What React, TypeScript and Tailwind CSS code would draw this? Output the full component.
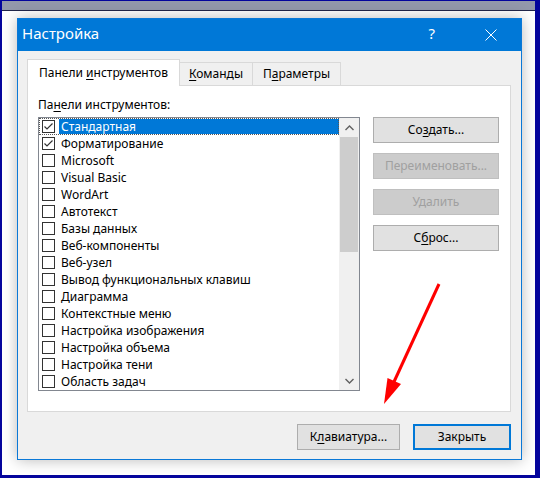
import React from "react";

const ITEMS = [
  "Стандартная",
  "Форматирование",
  "Microsoft",
  "Visual Basic",
  "WordArt",
  "Автотекст",
  "Базы данных",
  "Веб-компоненты",
  "Веб-узел",
  "Вывод функциональных клавиш",
  "Диаграмма",
  "Контекстные меню",
  "Настройка изображения",
  "Настройка объема",
  "Настройка тени",
  "Область задач",
];

function Check() {
  return (
    <svg width="11" height="11" viewBox="0 0 11 11" className="block">
      <polyline points="1.5,5.5 4,8 9.5,2.5" fill="none" stroke="#333" strokeWidth="1.2" />
    </svg>
  );
}

function Btn({ children, disabled, primary, className = "" }: { children: React.ReactNode; disabled?: boolean; primary?: boolean; className?: string }) {
  return (
    <div
      className={`h-[26px] flex items-center justify-center text-[12px] ${
        disabled
          ? "bg-[#cccccc] border border-[#bfbfbf] text-[#a0a0a0]"
          : primary
            ? "bg-[#e1e1e1] border-2 border-[#0078d7] text-black"
            : "bg-[#e1e1e1] border border-[#adadad] text-black"
      } ${className}`}
    >
      <span>{children}</span>
    </div>
  );
}

export default function App() {
  return (
    <div className="relative w-[540px] h-[478px] overflow-hidden bg-white flex flex-col border-[#04049c] border-t border-l-2 border-r-[5px] border-b-[3px] font-['Noto_Sans',sans-serif]">
      <div className="h-[9px] shrink-0 bg-[#9398ab]" />
      <div className="h-px shrink-0 bg-[#22264a]" />
      <div className="flex-1 pl-[15px] pt-[7px]">
        <div className="w-[505px] h-[442px] border border-[#0a78d7] bg-[#f0f0f0] flex flex-col shadow-[0_0_14px_rgba(0,0,0,0.28)]">
          {/* title bar */}
          <div className="h-[32px] shrink-0 bg-[#0078d7] flex items-center pl-[4px] pr-[24px] pb-[3px] text-white">
            <span className="text-[15px] leading-none">Настройка</span>
            <span className="ml-auto text-[15px] leading-none mr-[50px]">?</span>
            <svg width="12" height="12" viewBox="0 0 12 12" className="mt-[2px]">
              <path d="M0.5 0.5L11.5 11.5M11.5 0.5L0.5 11.5" stroke="#fff" strokeWidth="1" />
            </svg>
          </div>

          <div className="flex-1 flex flex-col pl-[9px] pt-[8px]">
            {/* tabs */}
            <div className="flex items-end h-[26px] text-[12px] text-black">
              <div className="relative z-10 -mb-px h-[27px] w-[153px] bg-white border border-b-0 border-[#d9d9d9] flex items-center justify-center">
                <span>
                  Панели <u className="underline-offset-2">и</u>нструментов
                </span>
              </div>
              <div className="h-[23px] w-[73px] border border-l-0 border-b-0 border-[#d9d9d9] flex items-center justify-center">
                <span>
                  <u className="underline-offset-2">К</u>оманды
                </span>
              </div>
              <div className="h-[23px] w-[88px] border border-l-0 border-b-0 border-[#d9d9d9] flex items-center justify-center">
                <span>
                  П<u className="underline-offset-2">а</u>раметры
                </span>
              </div>
            </div>

            {/* panel */}
            <div className="w-[484px] h-[327px] border border-[#d9d9d9] bg-white pl-[10px] pt-[11px] text-[12px] text-black">
              <div className="h-[15px] leading-[15px]">
                Па<u className="underline-offset-2">н</u>ели инструментов:
              </div>
              <div className="mt-[5px] flex gap-[13px]">
                <div className="w-[322px] h-[274px] border border-[#828790] flex">
                  <div className="flex-1 flex flex-col">
                    {ITEMS.map((it, i) => (
                      <div
                        key={it}
                        className={`h-[17px] flex items-center pl-[3px] ${i === 0 ? "outline outline-1 outline-dotted -outline-offset-1 outline-[#555]" : ""}`}
                      >
                        <div className="w-[13px] h-[13px] border border-[#333] bg-white flex items-center justify-center shrink-0">
                          {i < 2 && <Check />}
                        </div>
                        <div
                          className={`ml-[4px] flex-1 h-[15px] leading-[15px] pl-[2px] ${
                            i === 0 ? "bg-[#0078d7] text-white" : ""
                          }`}
                        >
                          {it}
                        </div>
                      </div>
                    ))}
                  </div>
                  {/* scrollbar */}
                  <div className="w-[20px] bg-[#f0f0f0] flex flex-col">
                    <div className="h-[19px] flex items-center justify-center">
                      <svg width="9" height="6" viewBox="0 0 9 6">
                        <polyline points="0.5,5 4.5,1 8.5,5" fill="none" stroke="#606060" strokeWidth="1.4" />
                      </svg>
                    </div>
                    <div className="mx-px h-[115px] bg-[#cdcdcd]" />
                    <div className="flex-1" />
                    <div className="h-[19px] flex items-center justify-center">
                      <svg width="9" height="6" viewBox="0 0 9 6">
                        <polyline points="0.5,1 4.5,5 8.5,1" fill="none" stroke="#606060" strokeWidth="1.4" />
                      </svg>
                    </div>
                  </div>
                </div>

                <div className="w-[126px] flex flex-col gap-[10px]">
                  <Btn>
                    Со<u className="underline-offset-2">з</u>дать...
                  </Btn>
                  <Btn disabled>Переименовать...</Btn>
                  <Btn disabled>Удалить</Btn>
                  <Btn>
                    С<u className="underline-offset-2">б</u>рос...
                  </Btn>
                </div>
              </div>
            </div>

            {/* bottom buttons */}
            <div className="mt-[12px] flex justify-end gap-[13px] pr-[10px]">
              <Btn className="w-[103px]">
                К<u className="underline-offset-2">л</u>авиатура...
              </Btn>
              <Btn primary className="w-[98px]">
                Закрыть
              </Btn>
            </div>
          </div>
        </div>
      </div>

      <svg className="absolute left-0 top-0 pointer-events-none" width="540" height="478" viewBox="0 0 540 478">
        <line x1="437" y1="283" x2="391" y2="383" stroke="#ff0000" strokeWidth="3" />
        <polygon points="382,403 385.5,377 399,383" fill="#ff0000" />
      </svg>
    </div>
  );
}
